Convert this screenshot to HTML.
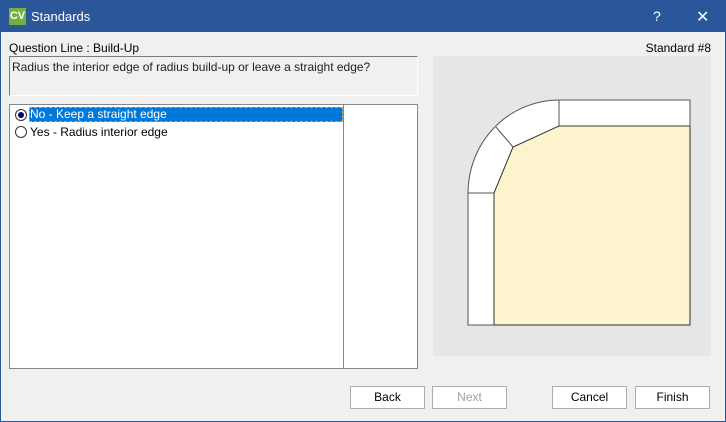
<!DOCTYPE html><html><head><style>
body{margin:0;width:726px;height:422px;overflow:hidden;font-family:"Liberation Sans",sans-serif;font-size:12px;color:#000}
.win{position:absolute;left:0;top:0;width:724px;height:420px;border:1px solid #2b579a;background:#f0f0f0}
.title{position:absolute;left:0;top:0;width:724px;height:31px;background:#2b579a;color:#fff}
.btn{position:absolute;top:385px;width:73px;height:21px;border:1px solid #adadad;background:#fff;text-align:center;line-height:21px}
</style></head><body><div class="win">
<div class="title">
<div style="position:absolute;left:8px;top:7px;width:17px;height:17px;background:#6cb33f;color:#fff;font-weight:bold;font-size:11px;line-height:17px;text-align:center">CV</div>
<div style="position:absolute;left:30px;top:8px;font-size:13px">Standards</div>
<div style="position:absolute;left:652px;top:7px;font-size:14px">?</div>
<div style="position:absolute;left:695px;top:6px;font-size:16px">✕</div>
</div>
<div style="position:absolute;left:8px;top:40px">Question Line : Build-Up</div>
<div style="position:absolute;right:14px;top:40px">Standard #8</div>
<div style="position:absolute;left:8px;top:55px;border:1px solid #7a7a7a;border-right-color:#fff;border-bottom-color:#fff;background:#f0f0f0;padding:3px 0 0 2px;box-sizing:border-box;width:409px;height:40px;color:#222">Radius the interior edge of radius build-up or leave a straight edge?</div>
<div style="position:absolute;left:8px;top:103px;width:407px;height:263px;border:1px solid #828790;background:#fff">
<div style="position:absolute;left:333px;top:0;width:1px;height:263px;background:#828790"></div>
<div style="position:absolute;left:19px;top:2px;width:313px;height:15px;background:#0078d7;outline:1px dashed #f0a030;outline-offset:-1px;color:#fff;line-height:15px;padding-left:1px">No - Keep a straight edge</div>
<div style="position:absolute;left:5px;top:4px;width:10px;height:10px;border:1px solid #333;border-radius:50%;background:#fff"><div style="position:absolute;left:2px;top:2px;width:6px;height:6px;border-radius:50%;background:#000060"></div></div>
<div style="position:absolute;left:5px;top:21px;width:10px;height:10px;border:1px solid #333;border-radius:50%;background:#fff"></div>
<div style="position:absolute;left:20px;top:20px">Yes - Radius interior edge</div>
</div>
<svg style="position:absolute;left:431px;top:54px" width="280" height="301" viewBox="431 54 280 301">
<rect x="432" y="55" width="278" height="300" fill="#e6e6e6"/>
<path d="M467,324 V192 A91,93 0 0 1 558,99 H689 V324 Z" fill="#fff" stroke="#555" stroke-width="1"/>
<path d="M493,324 V192 L512,146 L558,125 H689 V324 Z" fill="#fdf3cd" stroke="#333" stroke-width="1"/>
<path d="M495,126 L512,146 M558,99 V125 M467,192 H493" stroke="#555" fill="none"/>
</svg>
<div class="btn" style="left:349px">Back</div>
<div class="btn" style="left:431px;color:#a0a0a0">Next</div>
<div class="btn" style="left:551px">Cancel</div>
<div class="btn" style="left:634px">Finish</div>
</div></body></html>
